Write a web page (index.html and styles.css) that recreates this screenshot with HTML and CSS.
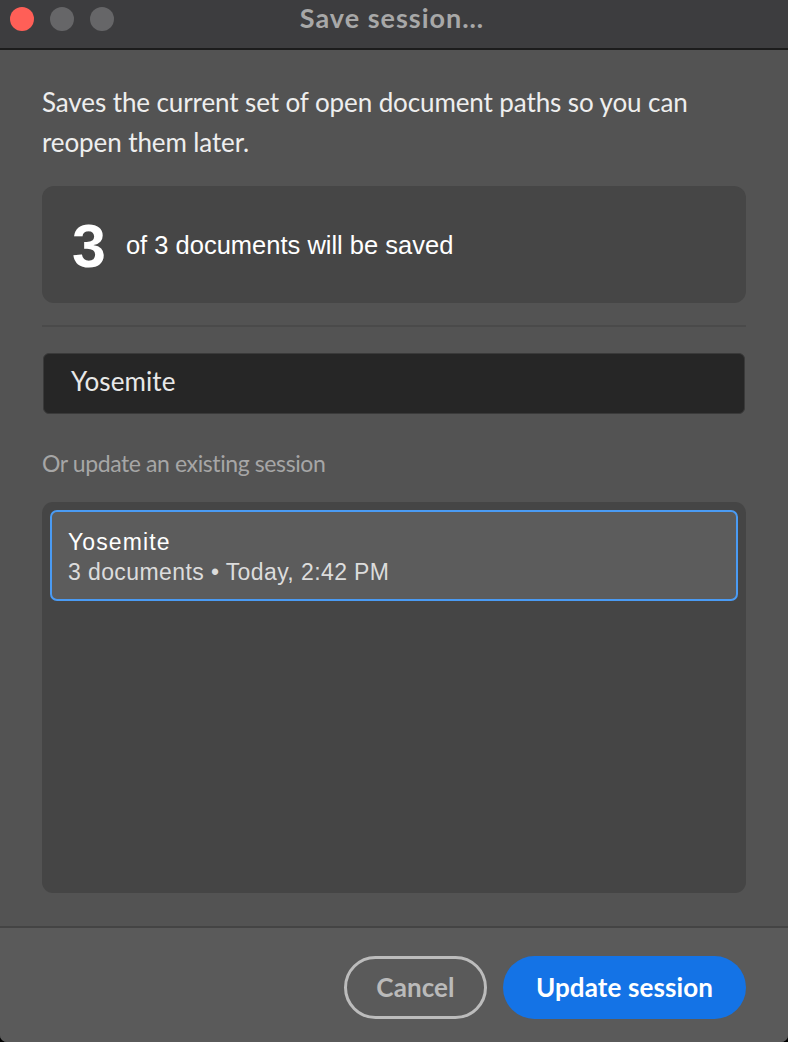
FILE: index.html
```html
<!DOCTYPE html>
<html lang="en">
<head>
<meta charset="utf-8">
<title>Save session…</title>
<link rel="stylesheet" href="styles.css">
</head>
<body>
<div class="window">
  <header class="titlebar">
    <div class="lights">
      <span class="light light-close"></span>
      <span class="light"></span>
      <span class="light"></span>
    </div>
    <div class="title">Save session…</div>
    <div class="spacer"></div>
  </header>

  <main class="content">
    <p class="description">Saves the current set of open document paths so you can reopen them later.</p>

    <section class="summary">
      <span class="summary-count">3</span>
      <span class="summary-text">of 3 documents will be saved</span>
    </section>

    <hr class="divider">

    <div class="name-field">Yosemite</div>

    <p class="section-label">Or update an existing session</p>

    <ul class="session-list">
      <li class="session-item selected">
        <div class="session-name">Yosemite</div>
        <div class="session-meta">3 documents • Today, 2:42 PM</div>
      </li>
    </ul>
  </main>

  <footer class="footer">
    <button class="btn btn-secondary">Cancel</button>
    <button class="btn btn-primary">Update session</button>
  </footer>
</div>
</body>
</html>
```

FILE: styles.css
```css
html {
  background: #000;
}

body {
  margin: 0;
  width: 788px;
  height: 1042px;
  overflow: hidden;
  font-family: "Lato", "Liberation Sans", sans-serif;
}

.window {
  width: 788px;
  height: 1042px;
  display: flex;
  flex-direction: column;
  background: #535353;
  border-radius: 0 0 7px 7px;
  overflow: hidden;
}

.titlebar {
  height: 48px;
  flex: none;
  background: #3d3d3f;
  border-bottom: 2px solid #1c1c1c;
  display: grid;
  grid-template-columns: 1fr auto 1fr;
  align-items: center;
}

.lights {
  display: flex;
  gap: 16px;
  padding-left: 10px;
  margin-top: -10px;
}

.light {
  width: 24px;
  height: 24px;
  border-radius: 50%;
  background: #666668;
}

.light-close {
  background: #ff5f57;
}

.title {
  color: #a8a8a8;
  font-weight: 700;
  font-size: 27px;
  letter-spacing: 1px;
  margin-top: -13px;
  margin-right: 4px;
}

.content {
  flex: 1;
  padding: 32px 42px 0;
  display: flex;
  flex-direction: column;
}

.description {
  margin: 0;
  color: #eeeeee;
  font-size: 26px;
  line-height: 40px;
  letter-spacing: -0.1px;
}

.summary {
  margin-top: 24px;
  height: 117px;
  border-radius: 12px;
  background: #464646;
  display: flex;
  align-items: center;
  padding-left: 30px;
  gap: 20px;
  font-family: "Liberation Sans", Arial, sans-serif;
  color: #ffffff;
}

.summary-count {
  font-size: 61px;
  font-weight: 700;
  line-height: 1;
  margin-top: 4px;
}

.summary-text {
  font-size: 25.5px;
  margin-top: 2px;
}

.divider {
  margin: 22px 0 0;
  border: 0;
  height: 2px;
  background: #4a4a4a;
}

.name-field {
  margin-top: 26px;
  margin-left: 1px;
  margin-right: 1px;
  height: 61px;
  box-sizing: border-box;
  border: 1px solid #3a3a3a;
  border-radius: 6px;
  background: #262626;
  padding: 0 0 6px 27px;
  display: flex;
  align-items: center;
  color: #e8e8e8;
  font-size: 26px;
  letter-spacing: 0.1px;
}

.section-label {
  margin: 34px 0 0;
  color: #a6a6a6;
  font-size: 23px;
  line-height: 30px;
  letter-spacing: -0.4px;
}

.session-list {
  list-style: none;
  margin: 24px 0 0;
  padding: 8px;
  height: 391px;
  box-sizing: border-box;
  border-radius: 11px;
  background: #454545;
  font-family: "Liberation Sans", Arial, sans-serif;
}

.session-item {
  border: 2px solid #4a9bf4;
  border-radius: 7px;
  background: #5c5c5c;
  padding: 15px 16px 12px;
  font-size: 23px;
  line-height: 30px;
}

.session-name {
  color: #ffffff;
  letter-spacing: 1.1px;
}

.session-meta {
  color: #dcdcdc;
  letter-spacing: 0.4px;
}

.footer {
  flex: none;
  height: 116px;
  box-sizing: border-box;
  border-top: 2px solid #444444;
  background: #5a5a5a;
  display: flex;
  justify-content: flex-end;
  align-items: flex-start;
  gap: 16px;
  padding: 28px 42px 0 0;
}

.btn {
  height: 63px;
  border-radius: 32px;
  font-family: "Lato", "Liberation Sans", sans-serif;
  font-weight: 700;
  font-size: 26px;
  letter-spacing: 0.1px;
  padding-bottom: 3px;
  cursor: pointer;
}

.btn-secondary {
  width: 143px;
  background: transparent;
  border: 3px solid #bcbcbc;
  color: #bababa;
}

.btn-primary {
  width: 243px;
  background: #1473e6;
  border: 0;
  color: #ffffff;
}
```
